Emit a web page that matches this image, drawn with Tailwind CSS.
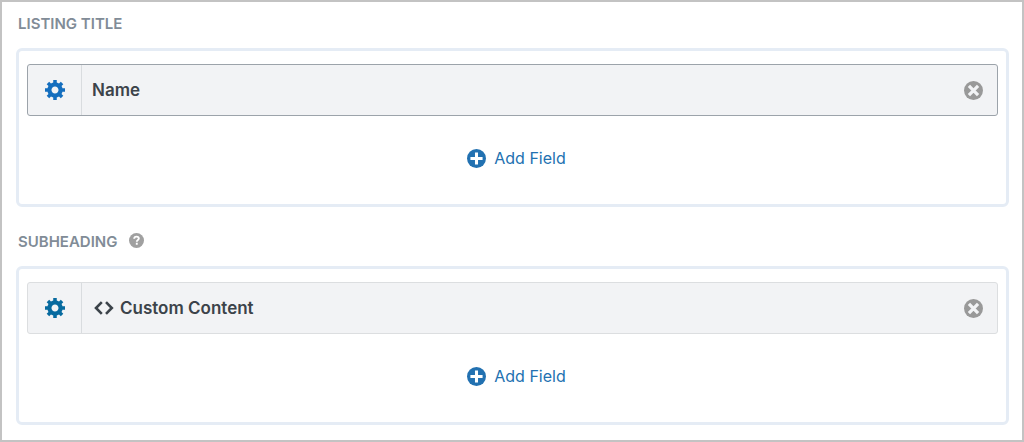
<!DOCTYPE html>
<html lang="en">
<head>
    <meta charset="UTF-8">
    <meta name="viewport" content="width=device-width, initial-scale=1.0">
    <title>Listing Fields</title>
    <script src="https://cdn.jsdelivr.net/npm/@tailwindcss/browser@4"></script>
</head>
<body class="bg-white font-['Inter',sans-serif]">
    <!-- Shared icons -->
    <svg class="hidden" aria-hidden="true">
        <symbol id="gear" viewBox="1 2 17 17">
            <path fill="currentColor" d="M18 12h-2.18c-.17.7-.44 1.35-.81 1.93l1.54 1.54-2.1 2.1-1.54-1.54c-.58.36-1.23.63-1.91.79V19H8v-2.18c-.68-.16-1.33-.43-1.91-.79l-1.54 1.54-2.12-2.12 1.54-1.54c-.36-.58-.63-1.23-.79-1.91H1V9.03h2.17c.16-.7.44-1.35.8-1.94L2.43 5.55l2.1-2.1 1.54 1.54c.58-.37 1.24-.64 1.93-.81V2h3v2.18c.68.16 1.33.43 1.91.79l1.54-1.54 2.12 2.12-1.54 1.54c.36.59.64 1.24.8 1.94H18V12zm-8.5 1.5c1.66 0 3-1.34 3-3s-1.34-3-3-3-3 1.34-3 3 1.34 3 3 3z"/>
        </symbol>
        <symbol id="remove" viewBox="0 0 20 20">
            <circle cx="10" cy="10" r="10" fill="currentColor"/>
            <path d="M5.2 5.2l9.6 9.6M14.8 5.2l-9.6 9.6" fill="none" stroke="#f2f3f5" stroke-width="3.4"/>
        </symbol>
        <symbol id="plus" viewBox="0 0 20 20">
            <circle cx="10" cy="10" r="10" fill="currentColor"/>
            <path d="M10 3.6v12.8M3.6 10h12.8" fill="none" stroke="#fff" stroke-width="3.2"/>
        </symbol>
    </svg>

    <main class="min-h-screen border-2 border-[#c3c3c3] pt-[10px] pb-[15px] pl-[14px] pr-[13px] flex flex-col gap-[23px]">
        <!-- Listing Title -->
        <section>
            <h2 class="h-6 mb-3 pl-[2px] text-[15px] leading-6 font-semibold uppercase text-[#818c97]">Listing Title</h2>
            <div class="border-3 border-[#e5ecf5] rounded-md px-2 pt-[13px] pb-[34px]">
                <div class="flex h-[52px] border border-[#9ca3aa] rounded-[3px] bg-[#f2f3f5] mb-[30px]">
                    <button type="button" aria-label="Field settings" class="w-[54px] flex items-center justify-center border-r border-[#d9dcdf] text-[#146ebe]">
                        <svg class="size-5"><use href="#gear"/></svg>
                    </button>
                    <span class="flex-1 pl-[10px] text-[17px] leading-[50px] font-semibold text-[#3c434a]">Name</span>
                    <button type="button" aria-label="Remove field" class="px-[14px] text-[#999]">
                        <svg class="size-[19px]"><use href="#remove"/></svg>
                    </button>
                </div>
                <button type="button" class="flex items-center gap-2 mx-auto pl-2 h-6 text-base text-[#2271b1]">
                    <svg class="size-[19px]"><use href="#plus"/></svg>
                    Add Field
                </button>
            </div>
        </section>

        <!-- Subheading -->
        <section>
            <div class="flex gap-3 h-6 mb-3 pl-[2px]">
                <h2 class="text-[15px] leading-6 font-semibold uppercase text-[#818c97]">Subheading</h2>
                <button type="button" aria-label="Help" class="h-5 text-[#a0a0a0]">
                    <svg class="size-[15px]" viewBox="0 0 16 16">
                        <circle cx="8" cy="8" r="8" fill="currentColor"/>
                        <path d="M5.5 6.1C5.6 4.5 6.6 3.8 8 3.8s2.5.8 2.5 2.1c0 1.5-2.2 1.6-2.2 3.3M8.3 10.5v2" fill="none" stroke="#fff" stroke-width="2"/>
                    </svg>
                </button>
            </div>
            <div class="border-3 border-[#e5ecf5] rounded-md px-2 pt-[13px] pb-[34px]">
                <div class="flex h-[52px] border border-[#dcdee0] rounded-[3px] bg-[#f2f3f5] mb-[30px]">
                    <button type="button" aria-label="Field settings" class="w-[54px] flex items-center justify-center border-r border-[#d9dcdf] text-[#076a9f]">
                        <svg class="size-5"><use href="#gear"/></svg>
                    </button>
                    <span class="flex-1 flex items-center gap-[6px] pl-3 text-[17px] leading-[50px] font-semibold text-[#3c434a]">
                        <svg class="w-5 h-[14px]" viewBox="0 0 20 14" fill="none" stroke="currentColor" stroke-width="2.6">
                            <path d="M7.8 1.2L2 7l5.8 5.8M12 1.2L17.8 7 12 12.8"/>
                        </svg>
                        Custom Content
                    </span>
                    <button type="button" aria-label="Remove field" class="px-[14px] text-[#999]">
                        <svg class="size-[19px]"><use href="#remove"/></svg>
                    </button>
                </div>
                <button type="button" class="flex items-center gap-2 mx-auto pl-2 h-6 text-base text-[#2271b1]">
                    <svg class="size-[19px]"><use href="#plus"/></svg>
                    Add Field
                </button>
            </div>
        </section>
    </main>
</body>
</html>
